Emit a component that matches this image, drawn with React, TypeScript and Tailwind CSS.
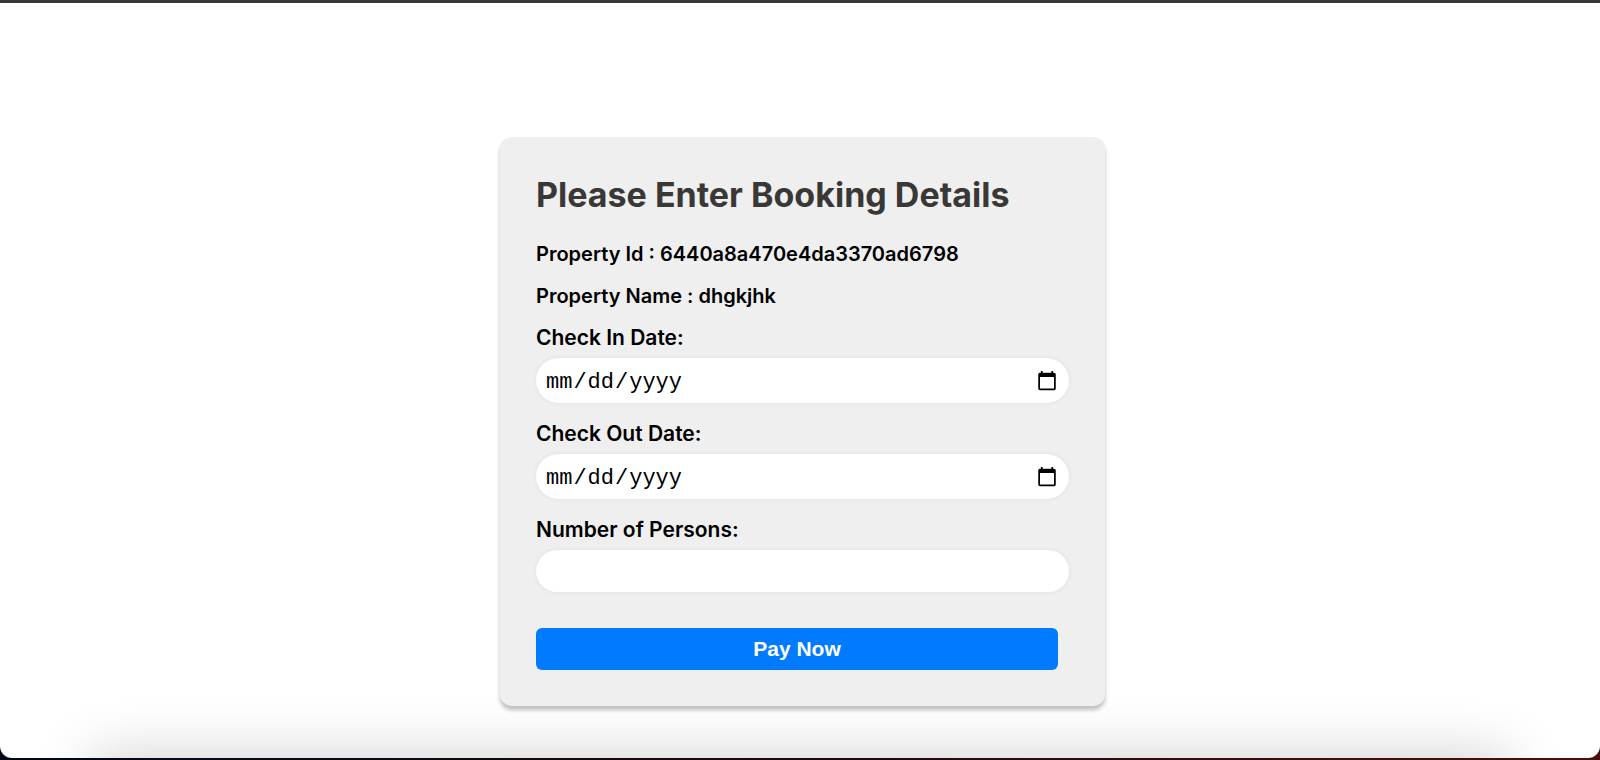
type FieldProps = {
  id: string;
  label: string;
  type: "date" | "number";
};

function Field({ id, label, type }: FieldProps) {
  return (
    <div className="flex flex-col gap-2">
      <label htmlFor={id} className="text-[21px] leading-6 font-semibold">
        {label}
      </label>
      <input
        id={id}
        name={id}
        type={type}
        className={`${type === "date" ? "h-[45px]" : "h-[42px]"} w-full rounded-full bg-white px-[9px] font-['Liberation_Mono',monospace] text-[22px] font-normal text-black shadow-[0_0_5px_rgba(0,0,0,0.07)] outline-none [&::-webkit-datetime-edit]:pt-1`}
      />
    </div>
  );
}

export default function App() {
  return (
    <div className="flex min-h-screen flex-col bg-linear-to-r from-[#000814] via-[#1c0810] to-[#4a0f0c] pb-0.5 font-['Inter',sans-serif] text-black">
      <main className="relative flex flex-1 flex-col overflow-hidden rounded-b-xl border-t-3 border-[#3a3837] bg-white pt-[134px] pr-4 pb-[52px] pl-[21px]">
        <div
          aria-hidden="true"
          className="absolute inset-x-[90px] top-full h-20 shadow-[0_0_60px_rgba(0,0,0,0.2)]"
        />
        <form className="relative mx-auto flex w-full max-w-[605px] flex-col rounded-xl bg-[#efefef] p-9 shadow-[0_4px_4px_rgba(0,0,0,0.25)]">
          <h1 className="mb-[25px] text-[34px] leading-11 font-bold text-[#3a3837]">
            Please Enter Booking Details
          </h1>
          <div className="flex flex-col gap-[18px] text-xl leading-6 font-semibold">
            <p>Property Id : 6440a8a470e4da3370ad6798</p>
            <p>Property Name : dhgkjhk</p>
            <div className="flex flex-col gap-[19px]">
              <Field id="check-in" label="Check In Date:" type="date" />
              <Field id="check-out" label="Check Out Date:" type="date" />
              <Field id="persons" label="Number of Persons:" type="number" />
            </div>
          </div>
          <button
            type="button"
            className="mt-9 mr-[11px] h-[42px] rounded-md bg-[#007bff] font-['Liberation_Sans',sans-serif] text-[21px] font-bold text-white"
          >
            Pay Now
          </button>
        </form>
      </main>
    </div>
  );
}
